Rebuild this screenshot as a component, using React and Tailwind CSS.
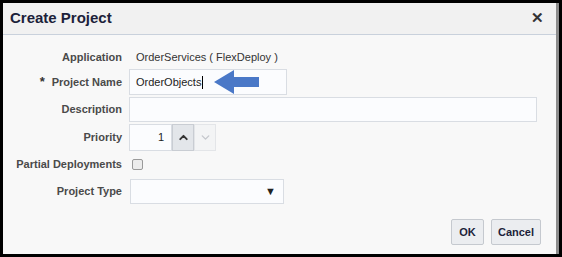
import { ChevronUp, ChevronDown } from 'lucide-react';

const font = { fontFamily: '"Liberation Sans", Arial, sans-serif' };

function Label({ children, required }) {
  return (
    <div className="w-[126px] shrink-0 pr-[7px] text-right text-[11px] font-bold text-[#4a4a4a]">
      {required && <span className="mr-[7px] text-[13px] text-[#333]">*</span>}
      {children}
    </div>
  );
}

function Arrow() {
  return (
    <svg width="47" height="26" viewBox="0 0 47 26" className="ml-[-74px]">
      <path d="M1 13 L21 1 L21 8 L46 8 L46 18 L21 18 L21 25 Z" fill="#4a78c7" />
    </svg>
  );
}

export default function App() {
  return (
    <div className="w-[562px] h-[257px] bg-black p-[3px]" style={font}>
      <div className="h-full flex flex-col bg-[#f8f8f8] border-r-[3px] border-[#8c8c8c]">
        <div className="h-[32px] shrink-0 flex items-center justify-between px-[7px] bg-[#f1f1f1] border-b border-[#c9d1dc]">
          <span className="text-[15px] font-bold text-[#1c1f3a]">Create Project</span>
          <span className="text-[15px] font-bold text-[#333] mr-[5px]">✕</span>
        </div>
        <div className="flex-1 flex flex-col pt-[15px]">
          <div className="flex items-center h-[14px]">
            <Label>Application</Label>
            <span className="pl-[7px] text-[11px] text-[#333]">OrderServices ( FlexDeploy )</span>
          </div>
          <div className="flex items-center h-[26px] mt-[5px]">
            <Label required>Project Name</Label>
            <div className="w-[158px] h-[26px] border border-[#d9dde3] bg-[#fbfcfe] flex items-center pl-[6px] text-[11px] text-[#222]">
              OrderObjects<span className="w-px h-[13px] bg-black ml-px" />
            </div>
            <Arrow />
          </div>
          <div className="flex items-center h-[25px] mt-[2px]">
            <Label>Description</Label>
            <div className="w-[408px] h-[25px] border border-[#d9dde3] bg-[#fbfcfe]" />
          </div>
          <div className="flex items-center h-[27px] mt-[2px]">
            <Label>Priority</Label>
            <div className="flex h-[27px]">
              <div className="w-[43px] border border-[#d9dde3] bg-[#fbfcfe] flex items-center justify-end pr-[7px] text-[11px] text-[#222]">1</div>
              <div className="w-[22px] border border-[#c9cdd3] bg-[#e3e6ea] flex items-center justify-center">
                <ChevronUp size={13} strokeWidth={3.5} className="text-[#333]" />
              </div>
              <div className="w-[22px] border border-[#e3e5e8] bg-[#f3f4f5] flex items-center justify-center">
                <ChevronDown size={13} strokeWidth={2.5} className="text-[#c4c7cc]" />
              </div>
            </div>
          </div>
          <div className="flex items-center mt-[5px] h-[16px]">
            <Label>Partial Deployments</Label>
            <div className="ml-[3px] w-[11px] h-[11px] rounded-[2px] border border-[#9a9a9a] bg-[#ececec]" />
          </div>
          <div className="flex items-center h-[25px] mt-[7px]">
            <Label>Project Type</Label>
            <div className="ml-[1px] w-[154px] h-[25px] border border-[#d9dde3] bg-[#fbfcfe] flex items-center justify-end pr-[7px] text-[11px] text-[#222]">▼</div>
          </div>
          <div className="flex justify-end gap-[7px] mt-[15px] pr-[15px]">
            <button className="w-[33px] h-[26px] border border-[#c5c9cf] bg-[#ebedf0] rounded-[2px] text-[11px] font-bold text-[#1c1f3a]">OK</button>
            <button className="w-[50px] h-[26px] border border-[#c5c9cf] bg-[#ebedf0] rounded-[2px] text-[11px] font-bold text-[#1c1f3a]">Cancel</button>
          </div>
        </div>
      </div>
    </div>
  );
}
